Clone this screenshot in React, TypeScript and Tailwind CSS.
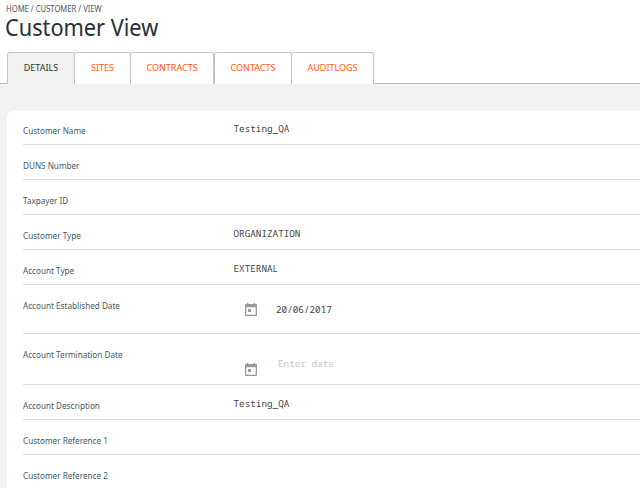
import React from 'react';

type Field = {
  label: string;
  value?: string;
  kind?: 'date' | 'empty-date';
  height: string;
};

const fields: Field[] = [
  { label: 'Customer Name', value: 'Testing_QA', height: 'h-[34px] pt-[13px]' },
  { label: 'DUNS Number', height: 'h-[35px] pt-[14px]' },
  { label: 'Taxpayer ID', height: 'h-[35px] pt-[14px]' },
  { label: 'Customer Type', value: 'ORGANIZATION', height: 'h-[35px] pt-[14px]' },
  { label: 'Account Type', value: 'EXTERNAL', height: 'h-[35px] pt-[14px]' },
  { label: 'Account Established Date', value: '20/06/2017', kind: 'date', height: 'h-[49px] pt-[14px]' },
  { label: 'Account Termination Date', kind: 'empty-date', height: 'h-[51px] pt-[14px]' },
  { label: 'Account Description', value: 'Testing_QA', height: 'h-[35px] pt-[14px]' },
  { label: 'Customer Reference 1', height: 'h-[35px] pt-[14px]' },
  { label: 'Customer Reference 2', height: 'h-[35px] pt-[14px]' },
];

const tabs = [
  { name: 'DETAILS', style: 'w-[68px] border-x bg-[#f1f1f1] text-[#333]' },
  { name: 'SITES', style: 'w-[56px] border-r bg-white text-[#ff5a0a]' },
  { name: 'CONTRACTS', style: 'w-[83px] border-r bg-white text-[#ff5a0a]' },
  { name: 'CONTACTS', style: 'w-[78px] border-x bg-white text-[#ff5a0a]' },
  { name: 'AUDITLOGS', style: 'w-[82px] border-r bg-white text-[#ff5a0a]' },
];

const mono = "font-['Noto_Sans_Mono','DejaVu_Sans_Mono',monospace]";

function CalendarIcon() {
  return (
    <svg width="12" height="13" viewBox="0 0 12 13" className="block shrink-0">
      <path
        fill="#999"
        fillRule="evenodd"
        d="M2 0h1.3v1h5.4V0H10v1h1q1 0 1 1v10q0 1-1 1H1q-1 0-1-1V2q0-1 1-1h1zM1.3 4.3v7.4h9.4V4.3zM3 6h3v3H3z"
      />
    </svg>
  );
}

function FieldValue({ field }: { field: Field }) {
  if (field.kind) {
    const filled = field.kind === 'date';
    return (
      <div className={`flex pl-[12px] ${filled ? 'pt-[4px]' : 'pt-[15px]'}`}>
        <CalendarIcon />
        <span
          className={`${mono} text-[9.3px] leading-[13px] ${
            filled ? 'ml-[19px] text-[#444]' : 'ml-[21px] -mt-[6px] text-[#c8c8c8]'
          }`}
        >
          {filled ? field.value : 'Enter date'}
        </span>
      </div>
    );
  }
  return <div className={`${mono} -mt-[2px] pl-[0.5px] text-[9.3px] leading-[13px] text-[#444]`}>{field.value}</div>;
}

export default function App() {
  return (
    <main className="h-[488px] w-[640px] overflow-hidden bg-[#f1f1f1] font-['Noto_Sans',sans-serif]">
      <header className="h-[84px] bg-white">
        <nav className="h-[14px] pl-[6px] pt-[3px] text-[9px] leading-[11px] text-[#455a64]">
          <span className="block w-fit origin-left scale-x-[0.85]">HOME / CUSTOMER / VIEW</span>
        </nav>
        <h1 className="h-[38px] pl-[4.5px] text-[24px] leading-[26px] text-[#263238]">
          <span className="block w-fit origin-left scale-x-[0.905]">Customer View</span>
        </h1>
        <div className="flex h-[32px]">
          <div className="w-[7px] border-b border-[#bdbdbd]" />
          {tabs.map((tab) => (
            <button
              key={tab.name}
              className={`h-[32px] rounded-t-[3px] border-t border-[#c4c4c4] pb-[2px] text-center text-[9px] leading-[28px] whitespace-nowrap ${tab.style}`}
            >
              {tab.name}
            </button>
          ))}
          <div className="flex-1 border-b border-[#bdbdbd]" />
        </div>
      </header>
      <section className="ml-[7px] mt-[27px] h-[377px] overflow-hidden rounded-tl-[6px] bg-white pl-[16px]">
        {fields.map((field) => (
          <div key={field.label} className={`flex border-b border-[#e0e0e0] ${field.height}`}>
            <div className="w-[210px] shrink-0 text-[9px] leading-[14px] text-[#455a64]">
              <span className="block w-fit origin-left scale-x-[0.905]">{field.label}</span>
            </div>
            <FieldValue field={field} />
          </div>
        ))}
      </section>
    </main>
  );
}
